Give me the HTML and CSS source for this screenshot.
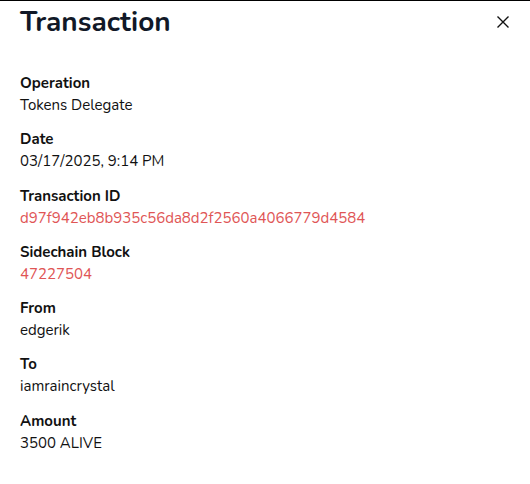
FILE: index.html
```html
<!DOCTYPE html>
<html>
<head>
<meta charset="utf-8">
<link rel="stylesheet" href="styles.css">
</head>
<body>
<div class="modal">
  <div class="header">
    <h1 class="title">Transaction</h1>
    <button class="close" aria-label="Close">
      <svg width="14" height="14" viewBox="0 0 14 14"><path d="M1.5 1.5 L12.5 12.5 M12.5 1.5 L1.5 12.5" stroke="#111" stroke-width="1.4" fill="none"/></svg>
    </button>
  </div>
  <dl class="fields">
    <div class="field"><dt>Operation</dt><dd>Tokens Delegate</dd></div>
    <div class="field"><dt>Date</dt><dd>03/17/2025, 9:14 PM</dd></div>
    <div class="field"><dt>Transaction ID</dt><dd class="link">d97f942eb8b935c56da8d2f2560a4066779d4584</dd></div>
    <div class="field"><dt>Sidechain Block</dt><dd class="link">47227504</dd></div>
    <div class="field"><dt>From</dt><dd>edgerik</dd></div>
    <div class="field"><dt>To</dt><dd>iamraincrystal</dd></div>
    <div class="field"><dt>Amount</dt><dd>3500 ALIVE</dd></div>
  </dl>
</div>
</body>
</html>
```
FILE: styles.css
```css
html, body {
  margin: 0;
  padding: 0;
  background: #fff;
}
body {
  font-family: "Nunito", "Open Sans", "Noto Sans", sans-serif;
  color: #111;
}
.modal {
  border-top: 1px solid #000;
  padding: 0 20px;
}
.header {
  display: flex;
  align-items: center;
  justify-content: space-between;
  height: 40px;
  margin-top: 1px;
}
.title {
  margin: 0;
  font-size: 28px;
  font-weight: 700;
  color: #111827;
  line-height: 40px;
}
.close {
  border: 0;
  background: none;
  padding: 0;
  width: 14px;
  height: 14px;
  display: flex;
}
.fields {
  margin: 30px 0 0 0;
  display: flex;
  flex-direction: column;
  gap: 12.3px;
}
.field dt {
  font-weight: 700;
  font-size: 15px;
  line-height: 22px;
}
.field dd {
  margin: 0;
  font-size: 15px;
  line-height: 22px;
}
.field dd.link {
  color: #e05555;
}
```
